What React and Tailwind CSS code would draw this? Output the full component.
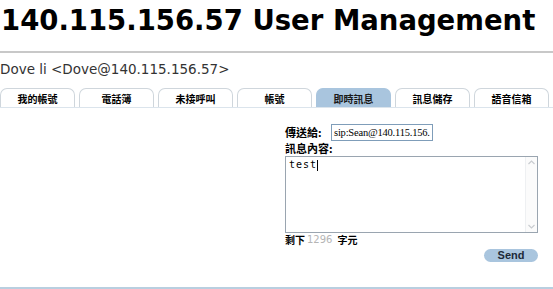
const tabs = ["我的帳號", "電話簿", "未接呼叫", "帳號", "即時訊息", "訊息儲存", "語音信箱"];

export default function App() {
  return (
    <div className="w-[553px] h-[289px] bg-white overflow-hidden relative font-['DejaVu_Sans',sans-serif]">
      <h1 className="text-[27.5px] leading-none font-bold text-black pt-[7px] pl-[1px]">
        140.115.156.57 User Management
      </h1>
      <div className="mt-[16px] h-[2px] bg-[#c8c8c8]" />
      <div className="mt-[10px] text-[13.5px] leading-none text-[#333]">Dove li &lt;Dove@140.115.156.57&gt;</div>

      <div className="mt-[12px] flex gap-[4px] border-b border-[#dbe4ec]">
        {tabs.map((t, i) => (
          <div
            key={t}
            className={
              "w-[75px] h-[19px] flex items-center justify-center rounded-t-[7px] border border-b-0 text-[10px] font-bold font-['Noto_Sans_CJK_TC',sans-serif] " +
              (i === 4 ? "bg-[#a9c5de] border-[#a9c5de] text-[#1a1a1a]" : "bg-white border-[#cfd6dc] text-black")
            }
          >
            {t}
          </div>
        ))}
      </div>

      <div className="ml-[285px] mt-[16px] w-[253px]">
        <div className="flex items-center">
          <span className="text-[11px] font-bold font-['Noto_Sans_CJK_TC',sans-serif] w-[46px]">傳送給:</span>
          <div className="w-[102px] h-[17px] border border-[#7f9db9] px-[2px] text-[10.5px] leading-[15px] font-['Liberation_Serif',serif] overflow-hidden whitespace-nowrap tracking-[-0.2px]">
            sip:Sean@140.115.156.
          </div>
        </div>
        <div className="text-[11px] font-bold font-['Noto_Sans_CJK_TC',sans-serif] leading-none mt-[2px]">訊息內容:</div>
        <div className="mt-[2px] h-[77px] border border-[#9aa5b0] flex">
          <div className="flex-1 px-[3px] pt-[3px] text-[10px] leading-none font-['DejaVu_Sans_Mono',monospace] tracking-[1px] flex items-start">
            test<span className="inline-block w-[1px] h-[11px] bg-black" />
          </div>
          <div className="w-[12px] border-l border-[#eef0f2] bg-[#fbfbfb] flex flex-col justify-between items-center py-[2px]">
            <svg width="9" height="7" viewBox="0 0 9 7"><path d="M1.5 5 L4.5 2 L7.5 5" fill="none" stroke="#c9ccd0" strokeWidth="1.2" /></svg>
            <svg width="9" height="7" viewBox="0 0 9 7"><path d="M1.5 2 L4.5 5 L7.5 2" fill="none" stroke="#c9ccd0" strokeWidth="1.2" /></svg>
          </div>
        </div>
        <div className="mt-[2px] text-[10px] leading-none flex items-center font-['Noto_Sans_CJK_TC',sans-serif]">
          <span className="font-bold">剩下</span>
          <span className="text-[#b5b5b5] font-['DejaVu_Sans',sans-serif] text-[10px] mx-[2px]">1296</span>
          <span className="ml-[3px] font-bold">字元</span>
        </div>
        <div className="flex justify-end mt-[4px]">
          <button className="w-[54px] h-[13px] rounded-full bg-[#a9c5de] text-[11px] leading-none font-bold text-[#1c2a38] font-['Liberation_Sans',sans-serif]">
            Send
          </button>
        </div>
      </div>

      <div className="absolute left-0 right-0 bottom-0 h-[2px] bg-[#b9cfe0]" />
    </div>
  );
}
